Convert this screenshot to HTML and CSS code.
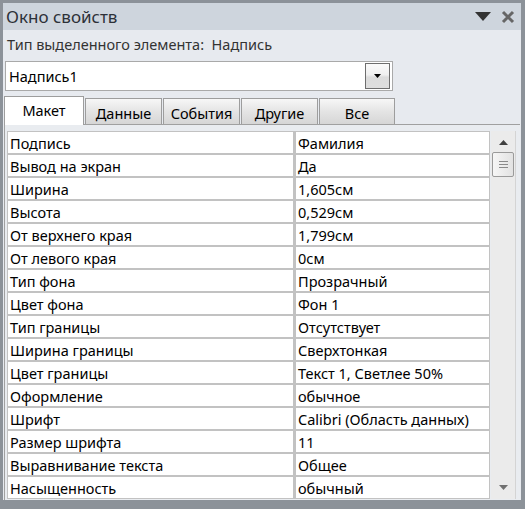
FILE: index.html
```
<!DOCTYPE html>
<html lang="ru">
<head>
<meta charset="utf-8">
<link rel="stylesheet" href="styles.css">
</head>
<body>
<div class="window">
  <div class="titlebar">
    <span class="title">Окно свойств</span>
    <div class="title-btns">
      <svg class="menu-arrow" width="16" height="10" viewBox="0 0 16 10"><path d="M0 0 H16 L8 9 Z" fill="#333"/></svg>
      <svg class="close" width="14" height="14" viewBox="0 0 14 14"><path d="M2 2 L12 12 M12 2 L2 12" stroke="#666" stroke-width="3"/></svg>
    </div>
  </div>
  <div class="seltype">Тип выделенного элемента:&nbsp; Надпись</div>
  <div class="combo">
    <span class="combo-text">Надпись1</span>
    <span class="combo-btn"><svg width="7" height="4" viewBox="0 0 7 4"><path d="M0 0 H7 L3.5 4 Z" fill="#000"/></svg></span>
  </div>
  <div class="tabs">
    <div class="tab active">Макет</div>
    <div class="tab">Данные</div>
    <div class="tab">События</div>
    <div class="tab">Другие</div>
    <div class="tab">Все</div>
  </div>
  <div class="panel">
    <div class="sheet">
      <div class="grid">
        <div class="cell">Подпись</div><div class="cell first-val">Фамилия</div>
        <div class="cell">Вывод на экран</div><div class="cell">Да</div>
        <div class="cell">Ширина</div><div class="cell">1,605см</div>
        <div class="cell">Высота</div><div class="cell">0,529см</div>
        <div class="cell">От верхнего края</div><div class="cell">1,799см</div>
        <div class="cell">От левого края</div><div class="cell">0см</div>
        <div class="cell">Тип фона</div><div class="cell">Прозрачный</div>
        <div class="cell">Цвет фона</div><div class="cell">Фон 1</div>
        <div class="cell">Тип границы</div><div class="cell">Отсутствует</div>
        <div class="cell">Ширина границы</div><div class="cell">Сверхтонкая</div>
        <div class="cell">Цвет границы</div><div class="cell">Текст 1, Светлее 50%</div>
        <div class="cell">Оформление</div><div class="cell">обычное</div>
        <div class="cell">Шрифт</div><div class="cell">Calibri (Область данных)</div>
        <div class="cell">Размер шрифта</div><div class="cell">11</div>
        <div class="cell">Выравнивание текста</div><div class="cell">Общее</div>
        <div class="cell">Насыщенность</div><div class="cell">обычный</div>
      </div>
      <div class="scrollbar">
        <svg class="sb-up" width="9" height="5" viewBox="0 0 9 5"><path d="M4.5 0 L9 5 H0 Z" fill="#404040"/></svg>
        <div class="thumb">
          <svg width="9" height="7" viewBox="0 0 9 7"><path d="M0 0.5 H9 M0 3.5 H9 M0 6.5 H9" stroke="#8a8a8a" stroke-width="1"/></svg>
        </div>
        <div class="sb-space"></div>
        <svg class="sb-down" width="9" height="5" viewBox="0 0 9 5"><path d="M0 0 H9 L4.5 5 Z" fill="#707070"/></svg>
      </div>
    </div>
  </div>
</div>
</body>
</html>
```

FILE: styles.css
```
html, body {
  margin: 0;
  padding: 0;
}
body {
  background: #8c9299;
  width: 525px;
  height: 509px;
  overflow: hidden;
  font-family: "Noto Sans", "Open Sans", sans-serif;
  font-size: 14.5px;
  color: #000;
}
.window {
  margin: 3px 4px 0 3px;
  height: 497px;
  background: #e7eaef;
  display: flex;
  flex-direction: column;
}
.titlebar {
  height: 27px;
  background: #ced5dd;
  display: flex;
  align-items: center;
  justify-content: space-between;
  padding: 0 6px 0 3px;
}
.title {
  font-size: 17px;
  color: #2d3138;
  line-height: 27px;
}
.title-btns {
  display: flex;
  align-items: center;
  gap: 10px;
}
.menu-arrow { margin-top: 1px; }
.seltype {
  color: #333;
  padding: 3px 0 0 4px;
  height: 23px;
  line-height: 23px;
}
.combo {
  margin: 5px 0 0 2px;
  width: 386px;
  height: 28px;
  background: #fff;
  border: 1px solid #a9a9a9;
  display: flex;
  align-items: center;
  justify-content: space-between;
}
.combo-text {
  padding-left: 3px;
}
.combo-btn {
  width: 23px;
  height: 24px;
  margin-right: 2px;
  border: 1px solid #6e6e6e;
  background: linear-gradient(#fafafa, #f0f0f0 45%, #dcdcdc 55%, #dedede);
  display: flex;
  align-items: center;
  justify-content: center;
}
.tabs {
  display: flex;
  align-items: flex-end;
  margin: 5px 0 0 1px;
  height: 28px;
}
.tab {
  height: 26px;
  border: 1px solid #9d9d9d;
  border-bottom: none;
  margin-left: 1px;
  background: linear-gradient(#f7f7f7, #e4e4e4 50%, #d6d6d6);
  text-align: center;
  line-height: 29px;
  box-sizing: border-box;
  width: 77px;
}
.tab:nth-child(5) { width: 76px; }
.tab.active {
  width: 80px;
  height: 29px;
  margin-left: 0;
  background: #fff;
  line-height: 27px;
  position: relative;
  z-index: 1;
  margin-bottom: -1px;
}
.panel {
  margin: 0 1px 0 1px;
  flex: 1;
  border: 1px solid #a0a0a0;
  border-bottom: none;
  border-right: none;
  padding: 6px 1px 0 2px;
  background: #e9ecf0;
}
.sheet {
  display: flex;
  height: 368px;
}
.grid {
  display: grid;
  grid-template-columns: 285px 193px;
  grid-auto-rows: 21px;
  gap: 2px 3px;
  padding: 1px;
  background: #c2c2c2;
  align-content: start;
  height: 366px;
}
.cell {
  background: #fff;
  line-height: 23px;
  padding-left: 2px;
  white-space: nowrap;
  overflow: hidden;
}
.scrollbar {
  width: 24px;
  margin-left: 1px;
  background: #ebebeb;
  border-right: 1px solid #d4d4d4;
  display: flex;
  flex-direction: column;
  align-items: center;
}
.sb-up { margin-top: 9px; }
.thumb {
  margin-top: 7px;
  width: 20px;
  height: 23px;
  border: 1px solid #9a9a9a;
  border-radius: 2px;
  background: linear-gradient(90deg, #f6f6f6, #e2e2e2);
  display: flex;
  align-items: center;
  justify-content: center;
}
.sb-space { flex: 1; }
.sb-down { margin-bottom: 9px; }
```
